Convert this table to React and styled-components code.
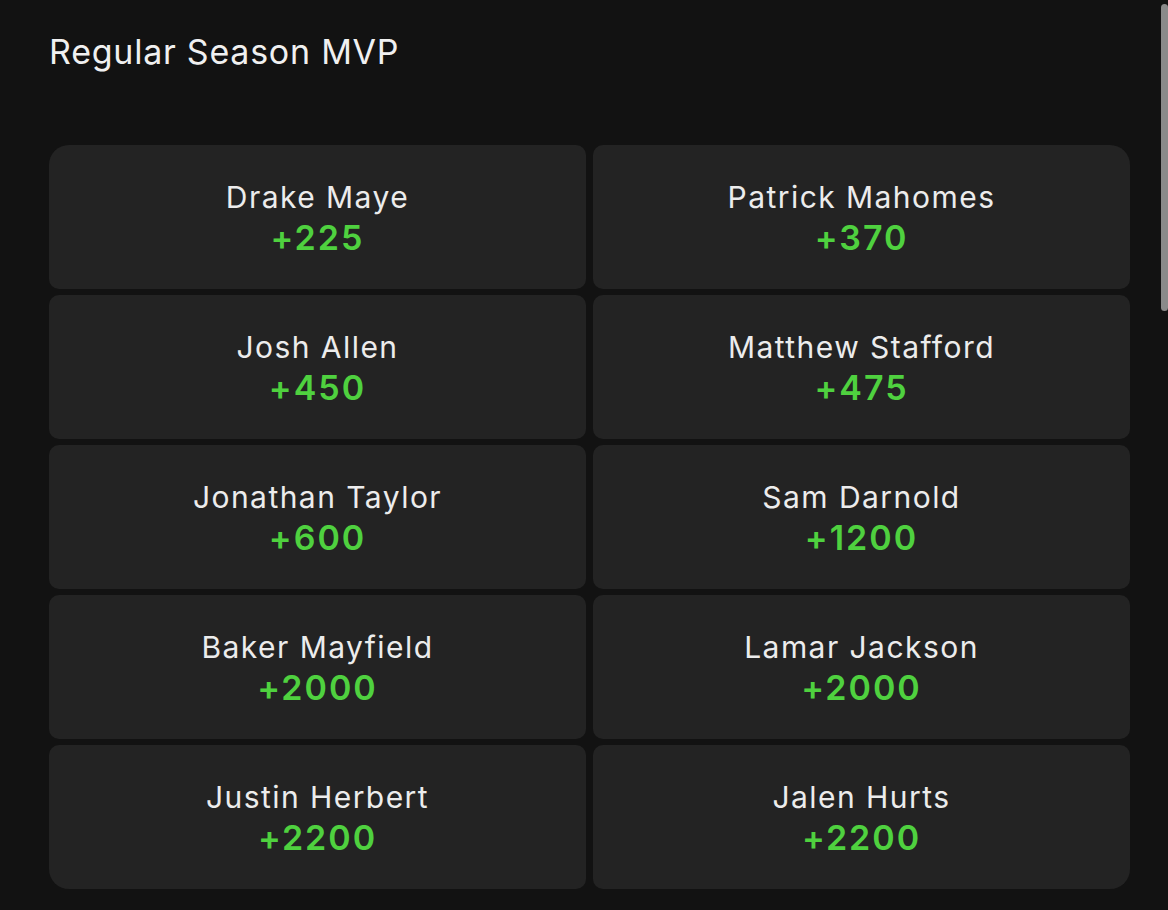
import React from "react";
import styled, { createGlobalStyle } from "styled-components";

const players = [
  { name: "Drake Maye", odds: "+225" },
  { name: "Patrick Mahomes", odds: "+370" },
  { name: "Josh Allen", odds: "+450" },
  { name: "Matthew Stafford", odds: "+475" },
  { name: "Jonathan Taylor", odds: "+600" },
  { name: "Sam Darnold", odds: "+1200" },
  { name: "Baker Mayfield", odds: "+2000" },
  { name: "Lamar Jackson", odds: "+2000" },
  { name: "Justin Herbert", odds: "+2200" },
  { name: "Jalen Hurts", odds: "+2200" },
];

const App = () => {
  return (
    <Page>
      <GlobalStyle />
      <Title>Regular Season MVP</Title>
      <Grid>
        {players.map((p) => (
          <Card key={p.name}>
            <Name>{p.name}</Name>
            <Odds>{p.odds}</Odds>
          </Card>
        ))}
      </Grid>
      <Scrollbar />
    </Page>
  );
};

const GlobalStyle = createGlobalStyle`
  html, body {
    margin: 0;
    padding: 0;
    background: #121212;
  }
  body {
    font-family: Inter, "Noto Sans", sans-serif;
    -webkit-font-smoothing: antialiased;
  }
`;

const Page = styled.main`
  position: relative;
  min-height: 910px;
  padding: 30px 0 21px 49px;
  box-sizing: border-box;
  background: #121212;
`;

const Title = styled.h1`
  margin: 0;
  font-size: 34px;
  font-weight: 400;
  line-height: 44px;
  color: #f0f0f0;
  letter-spacing: 0.75px;
`;

const Grid = styled.section`
  margin-top: 71px;
  width: 1081px;
  display: grid;
  grid-template-columns: 1fr 1fr;
  grid-auto-rows: 144px;
  gap: 6px 7px;
  border-radius: 20px;
  overflow: hidden;
`;

const Card = styled.div`
  background: #232323;
  border-radius: 10px;
  display: flex;
  flex-direction: column;
  align-items: center;
  justify-content: center;
  padding-top: 2px;
`;

const Name = styled.div`
  font-size: 30px;
  line-height: 40px;
  color: #ececec;
  letter-spacing: 1.45px;
`;

const Odds = styled.div`
  font-size: 34px;
  line-height: 42px;
  font-weight: 600;
  color: #4fd13f;
  letter-spacing: 2px;
`;

const Scrollbar = styled.div`
  position: absolute;
  top: 4px;
  right: 0;
  width: 7px;
  height: 307px;
  background: #8a8a8a;
  border-radius: 4px;
`;

export default App;
